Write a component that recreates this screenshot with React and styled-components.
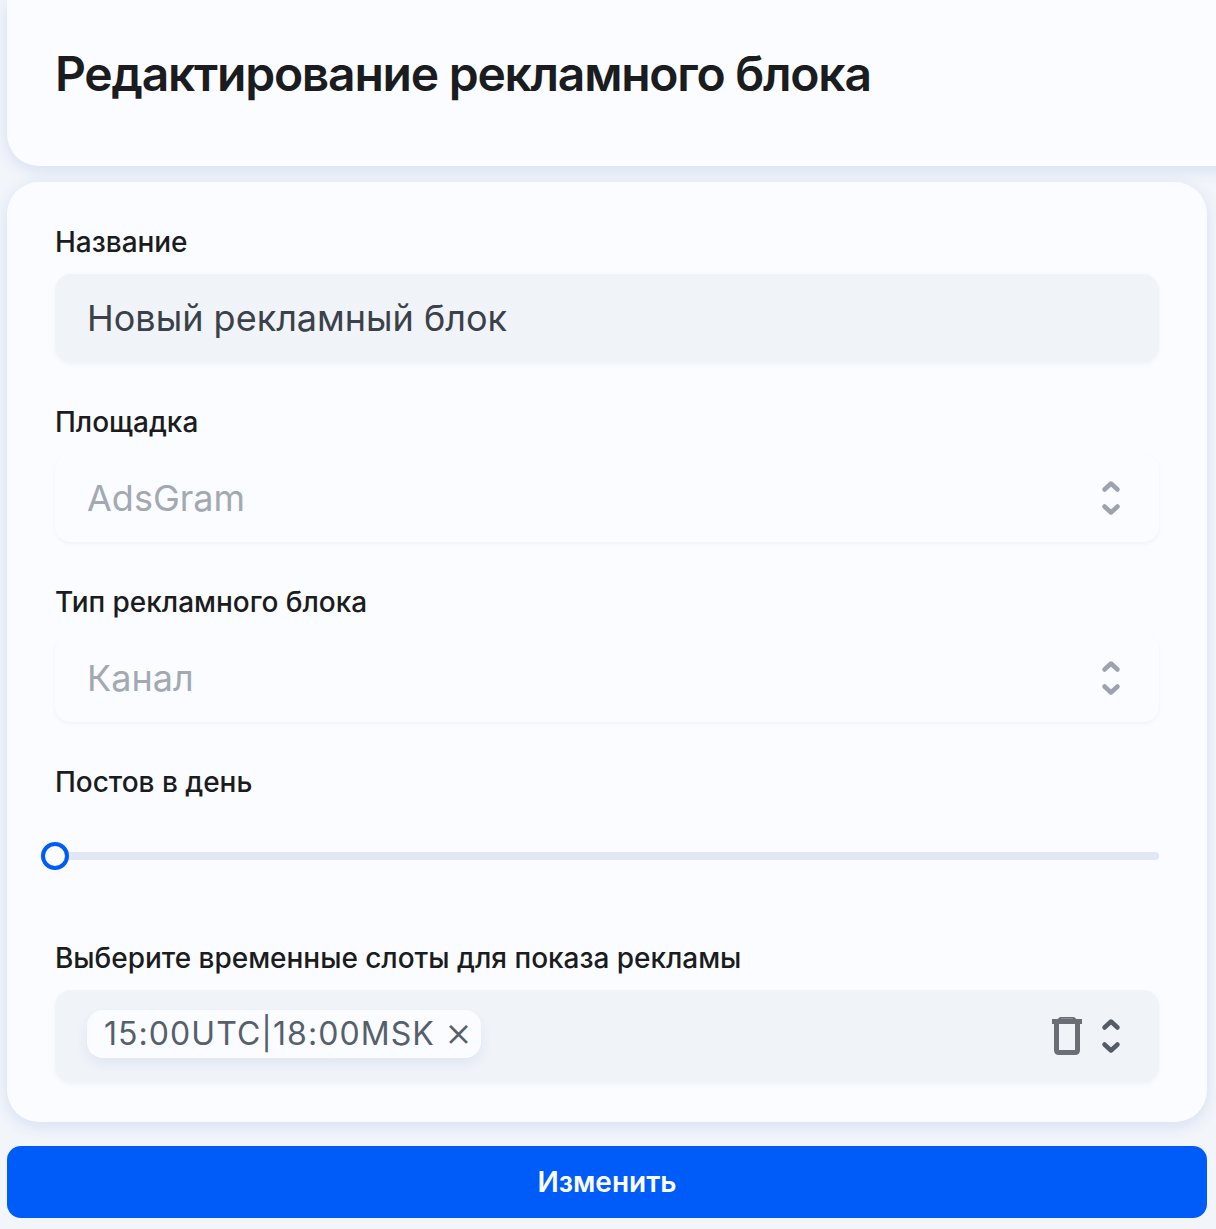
import React from 'react';
import styled, { createGlobalStyle } from 'styled-components';

const GlobalStyle = createGlobalStyle`
	html, body {
		margin: 0;
		padding: 0;
		background: #f2f5fa;
		overflow: hidden;
	}

	* {
		box-sizing: border-box;
	}
`;

const Chevrons = ({ color }) => (
	<ChevronIcon viewBox="0 0 20 38" fill="none" stroke={color} strokeWidth="4.5" strokeLinecap="round" strokeLinejoin="round">
		<path d="M3.5 10.5 10 4.5 16.5 10.5" />
		<path d="M3.5 27.5 10 33.5 16.5 27.5" />
	</ChevronIcon>
);

const Trash = () => (
	<TrashIcon viewBox="0 0 30 38" fill="none" stroke="#6b6e75">
		<path d="M0 4.5H30" strokeWidth="5" />
		<path d="M6.5 3C7 1 8 .8 10 .8H20C22 .8 23 1 23.5 3" strokeWidth="2" />
		<path d="M4.5 7V33C4.5 34.5 5.5 35.5 7 35.5H23C24.5 35.5 25.5 34.5 25.5 33V7" strokeWidth="5" />
	</TrashIcon>
);

const App = () => {
	return (
		<Page>
			<GlobalStyle />
			<Header>
				<Title>Редактирование рекламного блока</Title>
			</Header>
			<Card>
				<Field>
					<Label>Название</Label>
					<Control $filled>
						<Value>Новый рекламный блок</Value>
					</Control>
				</Field>
				<Field>
					<Label>Площадка</Label>
					<Control>
						<Value $muted>AdsGram</Value>
						<Chevrons color="#9ca3af" />
					</Control>
				</Field>
				<Field>
					<Label>Тип рекламного блока</Label>
					<Control>
						<Value $muted>Канал</Value>
						<Chevrons color="#9ca3af" />
					</Control>
				</Field>
				<SliderField>
					<Label>Постов в день</Label>
					<Slider>
						<Thumb />
					</Slider>
				</SliderField>
				<Field>
					<Label>Выберите временные слоты для показа рекламы</Label>
					<MultiControl>
						<Chip>
							<ChipText>15:00UTC|18:00MSK</ChipText>
							<ChipClose>×</ChipClose>
						</Chip>
						<Actions>
							<Trash />
							<Chevrons color="#555c66" />
						</Actions>
					</MultiControl>
				</Field>
			</Card>
			<SubmitButton>Изменить</SubmitButton>
		</Page>
	);
};

export default App;

// Styled components
const Page = styled.div`
	height: 1229px;
	padding-left: 7px;
	padding-right: 9px;
	font-family: Inter, "Liberation Sans", sans-serif;
	color: #1a1c20;
`;

const Header = styled.header`
	height: 166px;
	margin-right: -40px;
	padding: 0 48px 18px;
	display: flex;
	align-items: center;
	background: #fbfcff;
	border-radius: 0 0 0 32px;
	box-shadow: 0 4px 16px rgba(40, 90, 190, 0.14);
`;

const Title = styled.h1`
	margin: 0;
	font-size: 48px;
	font-weight: 600;
	line-height: 60px;
	letter-spacing: -1.25px;
`;

const Card = styled.section`
	margin-top: 16px;
	height: 940px;
	padding: 44px 48px 0 48px;
	background: #fbfcff;
	border-radius: 32px;
	box-shadow: 0 4px 16px rgba(40, 90, 190, 0.14);
`;

const Field = styled.div`
	margin-bottom: 44px;
`;

const SliderField = styled(Field)`
	margin-bottom: 82px;
`;

const Label = styled.div`
	font-size: 28px;
	font-weight: 500;
	line-height: 32px;
	margin-bottom: 16px;
	letter-spacing: -0.03px;
`;

const Control = styled.div`
	height: 88px;
	padding: 0 38px 0 32px;
	display: flex;
	align-items: center;
	justify-content: space-between;
	border-radius: 16px;
	background: ${(props) => (props.$filled ? '#f0f3f8' : '#fbfcff')};
	box-shadow: 0 2px 4px rgba(40, 90, 190, 0.06);
`;

const Value = styled.span`
	font-size: 36px;
	font-weight: 400;
	line-height: 44px;
	color: ${(props) => (props.$muted ? '#a3a9b2' : '#3a4149')};
`;

const ChevronIcon = styled.svg`
	width: 20px;
	height: 38px;
	display: block;
`;

const TrashIcon = styled.svg`
	width: 30px;
	height: 38px;
	display: block;
`;

const Slider = styled.div`
	position: relative;
	height: 8px;
	margin-top: 54px;
	border-radius: 4px;
	background: #e1e8f4;
`;

const Thumb = styled.div`
	position: absolute;
	left: -14px;
	top: -10px;
	width: 28px;
	height: 28px;
	border-radius: 50%;
	border: 4px solid #005cf9;
	background: #fbfcff;
`;

const MultiControl = styled.div`
	height: 92px;
	padding: 20px 38px 0 32px;
	display: flex;
	align-items: flex-start;
	justify-content: space-between;
	border-radius: 16px;
	background: #f0f3f8;
	box-shadow: 0 2px 4px rgba(40, 90, 190, 0.06);
`;

const Chip = styled.div`
	height: 48px;
	padding: 0 9px 0 17px;
	display: flex;
	align-items: center;
	gap: 10px;
	border-radius: 16px;
	background: #fbfcff;
	box-shadow: 0 6px 12px rgba(40, 90, 190, 0.08);
	color: #56606b;
`;

const ChipText = styled.span`
	font-size: 32px;
	line-height: 48px;
	font-weight: 400;
	letter-spacing: 1.05px;
`;

const ChipClose = styled.span`
	font-size: 42px;
	font-weight: 300;
	line-height: 48px;
	margin-top: -6px;
`;

const Actions = styled.div`
	display: flex;
	align-items: center;
	gap: 19px;
	margin-top: 7px;
	margin-right: 0;
`;

const SubmitButton = styled.button`
	display: block;
	width: 100%;
	height: 72px;
	margin-top: 24px;
	border: none;
	border-radius: 14px;
	background: #005cf9;
	color: #fbfcff;
	font-family: inherit;
	font-size: 28px;
	font-weight: 600;
`;
